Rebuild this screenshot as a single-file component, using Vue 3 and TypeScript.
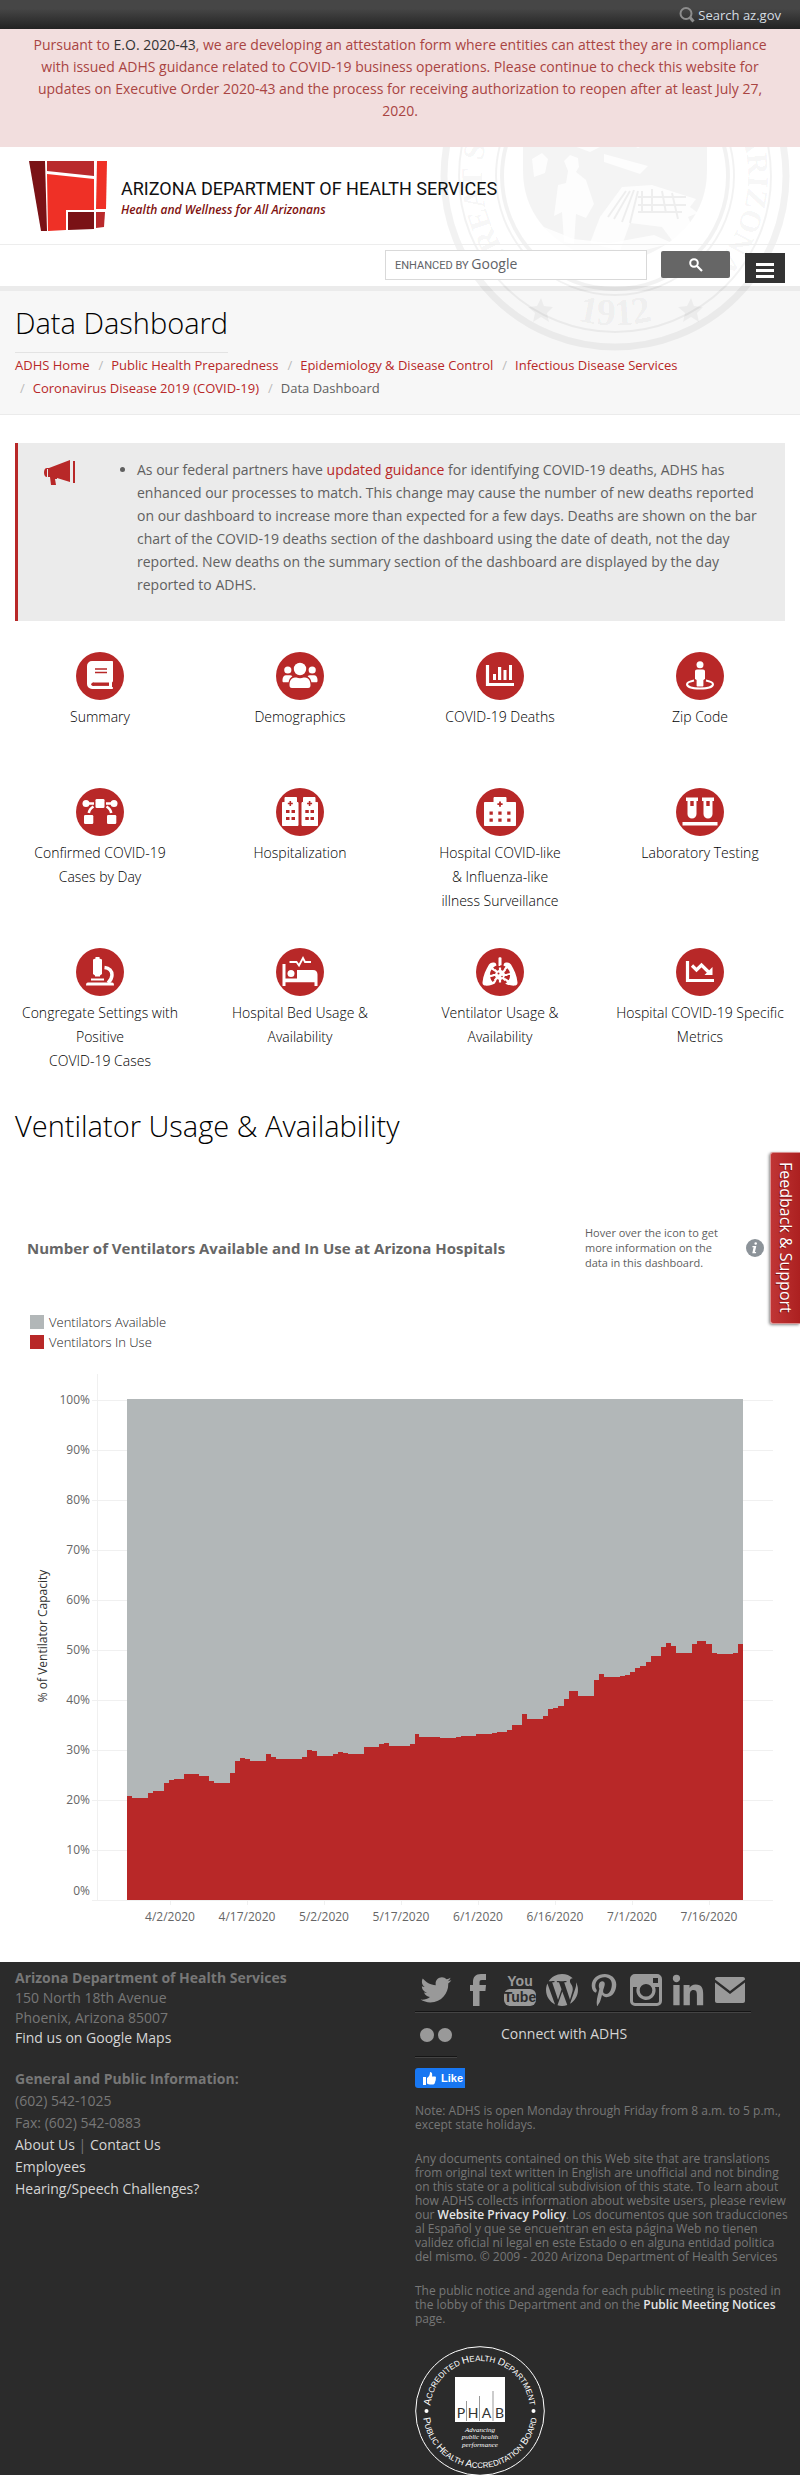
<script setup lang="ts">
interface Tile {
  icon: string
  lines: string[]
}

const crumbs: string[] = [
  'ADHS Home',
  'Public Health Preparedness',
  'Epidemiology & Disease Control',
  'Infectious Disease Services',
  'Coronavirus Disease 2019 (COVID-19)',
]

const tiles: Tile[] = [
  { icon: 'book', lines: ['Summary'] },
  { icon: 'users', lines: ['Demographics'] },
  { icon: 'bars', lines: ['COVID-19 Deaths'] },
  { icon: 'person', lines: ['Zip Code'] },
  { icon: 'nodes', lines: ['Confirmed COVID-19', 'Cases by Day'] },
  { icon: 'towers', lines: ['Hospitalization'] },
  { icon: 'hospital', lines: ['Hospital COVID-like', '& Influenza-like', 'illness Surveillance'] },
  { icon: 'vials', lines: ['Laboratory Testing'] },
  { icon: 'microscope', lines: ['Congregate Settings with', 'Positive', 'COVID-19 Cases'] },
  { icon: 'bed', lines: ['Hospital Bed Usage &', 'Availability'] },
  { icon: 'lungs', lines: ['Ventilator Usage &', 'Availability'] },
  { icon: 'trend', lines: ['Hospital COVID-19 Specific', 'Metrics'] },
]

const percents: number[] = [0, 10, 20, 30, 40, 50, 60, 70, 80, 90, 100]
const dates: string[] = ['4/2/2020', '4/17/2020', '5/2/2020', '5/17/2020', '6/1/2020', '6/16/2020', '7/1/2020', '7/16/2020']

// Ventilators in use: [start of step, level], five units to one percent.
const steps: [number, number][] = [
  [0, 104], [5, 102], [21, 107], [26, 109], [37, 117], [42, 120], [47, 121], [57, 126], [72, 124], [82, 119],
  [87, 117], [103, 127], [108, 139], [113, 142], [118, 141], [123, 139], [139, 146], [144, 143], [149, 141],
  [175, 143], [180, 150], [185, 149], [190, 144], [206, 146], [211, 148], [216, 147], [221, 146], [237, 153],
  [252, 156], [257, 157], [262, 154], [283, 156], [288, 166], [292, 163], [313, 162], [329, 163], [334, 164],
  [349, 166], [365, 167], [370, 168], [380, 170], [385, 175], [395, 186], [400, 181], [416, 184], [421, 191],
  [426, 192], [431, 194], [437, 201], [442, 209], [451, 204], [467, 220], [472, 226], [477, 223], [493, 224],
  [498, 225], [503, 228], [508, 232], [513, 234], [519, 238], [524, 244], [534, 253], [539, 257], [544, 254],
  [549, 247], [565, 256], [570, 259], [579, 256], [585, 247], [590, 246], [606, 247], [611, 256],
]
const plotLeft = 127
const plotWidth = 616
const baseY = 540
const yAt = (percent: number): number => baseY - percent * 5
const usePath: string =
  `M${plotLeft} ${baseY}` +
  steps.map(([x, v]) => `H${plotLeft + x}V${baseY - v}`).join('') +
  `H${plotLeft + plotWidth}V${baseY}Z`
</script>

<template>
  <div class="page">
    <div class="topbar">
      <a href="#" class="az-search">
        <svg width="16" height="16" viewBox="0 0 16 16" aria-hidden="true">
          <circle cx="7" cy="6.500" r="5.500" fill="none" stroke="#8d8d8d" stroke-width="2" />
          <path d="M11 10.500l3.500 4" stroke="#8d8d8d" stroke-width="3" />
        </svg>
        <span>Search az.gov</span>
      </a>
    </div>

    <div class="notice">
      <p>
        Pursuant to <a href="#">E.O. 2020-43</a>, we are developing an attestation form where entities can attest they
        are in compliance with issued ADHS guidance related to COVID-19 business operations. Please continue to check
        this website for updates on Executive Order 2020-43 and the process for receiving authorization to reopen after
        at least July 27, 2020.
      </p>
    </div>

    <div class="masthead">
      <header class="brand-row">
        <a href="#" class="brand">
          <svg width="78" height="70" viewBox="0 0 78 70" aria-hidden="true">
            <path d="M0 0h16l2 70h-6z" fill="#7a1216" />
            <path d="M18 0h47v15l-47-5z" fill="#b92a2c" />
            <path d="M18 13l47 5v31H37v20l-18 1z" fill="#ef3026" />
            <path d="M68 0h10l-1 48h-10z" fill="#ef3026" />
            <path d="M39 51h26v17l-26 1z" fill="#7a1216" />
            <path d="M67 51h9l-1 15-8 1z" fill="#b92a2c" />
          </svg>
          <span class="brand-text">
            <span class="brand-name">ARIZONA DEPARTMENT OF HEALTH SERVICES</span>
            <span class="brand-tag">Health and Wellness for All Arizonans</span>
          </span>
        </a>
      </header>

      <div class="tools">
        <form class="search" @submit.prevent>
          <div class="field">
            <input id="site-search" type="text" aria-label="Search this site, enhanced by Google" />
            <label for="site-search" class="hint">ENHANCED BY <b>Google</b></label>
          </div>
          <button type="submit" class="go" aria-label="Search">
            <svg width="14" height="14" viewBox="0 0 14 14">
              <circle cx="5" cy="5" r="3.800" fill="none" stroke="#fff" stroke-width="2" />
              <path d="M8 8l5 5" stroke="#fff" stroke-width="2.200" />
            </svg>
          </button>
        </form>
        <button type="button" class="menu" aria-label="Menu">
          <span></span><span></span><span></span>
        </button>
      </div>

      <div class="titlebar">
        <h1>Data Dashboard</h1>
        <nav aria-label="Breadcrumb">
          <ol class="crumbs">
            <li v-for="c in crumbs" :key="c"><a href="#">{{ c }}</a></li>
            <li>Data Dashboard</li>
          </ol>
        </nav>
      </div>

      <svg class="seal" viewBox="0 0 350 350" aria-hidden="true">
        <defs>
          <path id="seal-top" d="M81 269A133 133 0 1 1 269 269" />
          <path id="seal-low" d="M60 270A149 149 0 0 0 290 270" />
        </defs>
        <g fill="none" stroke="#000" stroke-opacity=".05">
          <circle cx="175" cy="175" r="171" stroke-width="7" />
          <circle cx="175" cy="175" r="156" stroke-width="2" />
          <circle cx="175" cy="175" r="119" stroke-width="2" />
          <circle cx="175" cy="175" r="113" stroke-width="4" />
        </g>
        <g fill="#000" fill-opacity=".045">
          <path d="M83 70h184v100c0 50-38 82-92 94-54-12-92-44-92-94z" />
          <path d="M101 297l3 8 9 1-6 6 2 9-8-5-8 5 2-9-7-6 9-1zM251 297l3 8 9 1-6 6 2 9-8-5-8 5 2-9-7-6 9-1z" />
        </g>
        <g fill="#fff" fill-opacity=".8">
          <path d="M118 184l8-2 2-12-4-10 6-6 8 3 1 9-3 5 10 8 8 24-8 14-10-4-2 30-10-2-2-30-8 4z" />
          <path d="M160 216l22-30 30-2 44 14-6 8 8 6-10 4 6 14-14 20-18-24-32-4-10 28-30-8z" />
          <path d="M92 158l10-6 6 6-3 14-11 4z" />
          <path d="M134 145l24-20 20 12 26-14 20 14 24-6v8l-26-4-24 12-20-10-28 14z" />
          <path d="M104 226l30 12 36 4 44-8 18 8-30 8-66 2-26-12z" />
          <path d="M164 153l44 12-8 8-36-12z" />
        </g>
        <g fill="none" stroke="#000" stroke-opacity=".06" stroke-width="2">
          <path d="M168 216l18-26M174 218l16-28M182 221l12-32M190 222l8-32M202 190v20M212 188v22M222 190l4 22M232 192l6 26M198 196h48M198 204h48M198 211h44" />
        </g>
        <g class="seal-text">
          <text><textPath href="#seal-top" startOffset="8">GREAT S</textPath></text>
          <text text-anchor="end"><textPath href="#seal-top" startOffset="99%">ARIZONA</textPath></text>
          <text class="seal-year" text-anchor="middle"><textPath href="#seal-low" startOffset="50%">1912</textPath></text>
        </g>
      </svg>
    </div>

    <main>
      <section class="callout">
        <svg class="horn" width="32" height="25" viewBox="0 0 32 25" aria-hidden="true">
          <path d="M3 8h2l21-8v22L13 18v1h-2l1 6H7L6 17H3c-2 0-3-2-3-4.500S1 8 3 8z" fill="#b82828" />
          <path d="M3.500 9v8" stroke="#ebebeb" stroke-width="1" />
          <path d="M30 1v22" stroke="#b82828" stroke-width="2" />
        </svg>
        <ul>
          <li>
            As our federal partners have <a href="#">updated guidance</a> for identifying COVID-19 deaths, ADHS has
            enhanced our processes to match. This change may cause the number of new deaths reported on our dashboard
            to increase more than expected for a few days. Deaths are shown on the bar chart of the COVID-19 deaths
            section of the dashboard using the date of death, not the day reported. New deaths on the summary section
            of the dashboard are displayed by the day reported to ADHS.
          </li>
        </ul>
      </section>

      <nav class="tiles" aria-label="Dashboards">
        <a v-for="t in tiles" :key="t.icon" href="#" class="tile">
          <svg width="48" height="48" viewBox="0 0 48 48" fill="#fff" aria-hidden="true">
            <circle cx="24" cy="24" r="24" fill="#b82828" />
            <template v-if="t.icon === 'book'">
              <path d="M16 9h20c.6 0 1 .4 1 1v19c0 .6-.4 1-1 1.500v4.500c.6 0 1 .4 1 1s-.4 1-1 1H16a5 5 0 0 1-5-5V14a5 5 0 0 1 5-5z" />
              <path d="M19 17h12M19 20.500h12" stroke="#b82828" stroke-width="1.300" />
              <path d="M17 32.200h16" stroke="#b82828" stroke-width="3.400" />
              <circle cx="17" cy="32.200" r="1.700" fill="#b82828" />
            </template>
            <template v-else-if="t.icon === 'users'">
              <circle cx="24" cy="17" r="6.200" /><circle cx="11.800" cy="18" r="3.600" /><circle cx="36.200" cy="18" r="3.600" />
              <path d="M19 25.500h1.500c2 1 5 1 7 0H29c4 0 5.500 4 5.500 7.500 0 2-.6 3-2.500 3H16c-1.900 0-2.500-1-2.500-3 0-3.500 1.500-7.500 5.500-7.500z" />
              <path d="M10 23.300h4c1 0 1.800.3 2.400.9-2.200 1.300-3.500 3.500-3.800 6.100H7.800c-.8 0-1.300-.5-1.300-1.300v-1.200c0-2.500 1.500-4.500 3.500-4.500zM38 23.300h-4c-1 0-1.800.3-2.400.9 2.200 1.300 3.500 3.500 3.800 6.100h4.800c.8 0 1.300-.5 1.300-1.300v-1.200c0-2.500-1.500-4.500-3.500-4.500z" />
            </template>
            <template v-else-if="t.icon === 'bars'">
              <path d="M11.500 13v19.500H38" fill="none" stroke="#fff" stroke-width="3.200" />
              <path d="M17 22h3v6h-3zM22 15h3.200v13H22zM27.500 18h3v10h-3zM33 13h3v15h-3z" />
            </template>
            <template v-else-if="t.icon === 'person'">
              <circle cx="24" cy="12.800" r="3.500" />
              <path d="M21 17.500h6c1.200 0 2 .8 2 2V27l-1.600 1v5.500c0 .6-.4 1-1 1h-4.800c-.6 0-1-.4-1-1V28L19 27v-7.500c0-1.200.8-2 2-2z" />
              <path d="M18 28.500c-4 .8-7 2-7 3.800 0 2.500 5.500 4.300 13 4.300s13-1.800 13-4.300c0-1.800-3-3-7-3.800" fill="none" stroke="#fff" stroke-width="2" />
            </template>
            <template v-else-if="t.icon === 'nodes'">
              <rect x="19.500" y="11" width="9" height="9" rx="1.300" /><rect x="8" y="27" width="9.300" height="9" rx="1.300" />
              <rect x="31" y="27" width="9.300" height="9" rx="1.300" /><circle cx="10" cy="15.500" r="3.500" /><circle cx="38" cy="15.500" r="3.500" />
              <path d="M12 15.500h6M30 15.500h6M17.500 18.500c-2.700 1.600-4.300 3.600-4.700 6.500M30.500 18.500c2.700 1.600 4.300 3.600 4.700 6.500" fill="none" stroke="#fff" stroke-width="2.600" />
            </template>
            <template v-else-if="t.icon === 'towers'">
              <path d="M9 9.500h11.500v5H22v23H6.500v-23H9zM27.500 9.500H39v5h2.500v23H26v-23h1.500z" stroke="#fff" />
              <path d="M14.300 13v5M11.800 15.500h5M33.600 13v5M31.100 15.500h5" stroke="#b82828" stroke-width="1.600" />
              <path d="M10 22h3.500v3H10zM15.500 22H19v3h-3.500zM10 29h3.500v3H10zM15.500 29H19v3h-3.500zM29.300 22h3.500v3h-3.500zM34.500 22H38v3h-3.500zM29.300 29h3.500v3h-3.500zM34.500 29H38v3h-3.500z" fill="#b82828" />
            </template>
            <template v-else-if="t.icon === 'hospital'">
              <path d="M18 9.500h12v5h9.500v23h-31v-23H18z" stroke="#fff" />
              <path d="M24 13.500v5.200M21.400 16.100h5.200" stroke="#b82828" stroke-width="1.800" />
              <path d="M13.500 23.500h3.300v3.300h-3.300zM22.300 23.500h3.300v3.300h-3.300zM31.200 23.500h3.300v3.300h-3.300zM13.500 30.500h3.300v3.300h-3.300zM22.300 30.500h3.300v3.300h-3.300zM31.200 30.500h3.300v3.300h-3.300z" fill="#b82828" />
            </template>
            <template v-else-if="t.icon === 'vials'">
              <path d="M10 9.500h12v3.500h-1.500v13a4.500 4.500 0 0 1-9 0V13H10zM26 9.500h12v3.500h-1.500v13a4.500 4.500 0 0 1-9 0V13H26zM6.500 34h35v3.500h-35z" />
              <path d="M14.300 13h3.400v5h-3.400zM30.300 13h3.400v5h-3.400z" fill="#b82828" />
            </template>
            <template v-else-if="t.icon === 'microscope'">
              <path d="M19.500 9h4v1.500l2.500 1V26l-2 1.500v1h-5v-1L17 26V11.500l2.500-1zM15 30.500h13v2H15z" />
              <path d="M28.500 19.500c5 .5 7.500 3.800 7.500 7.500 0 3.500-1.500 5.500-4 8" fill="none" stroke="#fff" stroke-width="3.500" />
              <path d="M12 34.500h24c1.500 0 2 1 2 3H10c0-2 .5-3 2-3z" />
            </template>
            <template v-else-if="t.icon === 'bed'">
              <path d="M6.500 16h3v16.500H41.500V38h-3v-3.800h-29V38h-3zM21 22h16c3 0 4.500 2 4.500 4.500v6H21z" />
              <circle cx="15" cy="25.500" r="3.500" />
              <path d="M8 32h33" stroke="#fff" stroke-width="3" />
              <path d="M13.500 14h7l2.500 3.500L27 10l2 4h6" fill="none" stroke="#fff" stroke-width="1.800" />
            </template>
            <template v-else-if="t.icon === 'lungs'">
              <path d="M22.500 10c0-1 3-1 3 0v8h-3z" />
              <path d="M17 14.500c3 0 3.500 1.500 3.500 4v16c-3 2.500-8 3.500-12 3-1.500-.4-2-1.500-2-3 .5-7 3.500-13 6.500-18 1-1.300 2.300-2 4-2zM31 14.500c-3 0-3.500 1.500-3.500 4v16c3 2.500 8 3.500 12 3 1.500-.4 2-1.500 2-3-.5-7-3.500-13-6.500-18-1-1.300-2.300-2-4-2z" />
              <circle cx="24" cy="27" r="8" fill="none" stroke="#b82828" stroke-width="4.200" stroke-dasharray="4.300 2" />
              <circle cx="24" cy="27" r="6.500" fill="#b82828" />
              <path d="M24 19.500v15M16.500 27h15M18.700 21.700l10.600 10.600M29.300 21.700L18.700 32.300" stroke="#fff" stroke-width="2.200" />
              <circle cx="24" cy="27" r="5" /><circle cx="22.500" cy="25.500" r="1" fill="#b82828" /><circle cx="26" cy="28.500" r=".8" fill="#b82828" />
            </template>
            <template v-else>
              <path d="M11.500 13v19.500H38" fill="none" stroke="#fff" stroke-width="3.200" />
              <path d="M16 17.500l4.500 4.500 5-5 7 7" fill="none" stroke="#fff" stroke-width="3.200" />
              <path d="M36.500 19v8h-8z" />
            </template>
          </svg>
          <span class="tile-label"><span v-for="l in t.lines" :key="l">{{ l }}</span></span>
        </a>
      </nav>

      <h2>Ventilator Usage &amp; Availability</h2>

      <section class="viz">
        <div class="viz-head">
          <h3>Number of Ventilators Available and In Use at Arizona Hospitals</h3>
          <p>Hover over the icon to get more information on the data in this dashboard.</p>
          <svg width="18" height="18" viewBox="0 0 18 18" role="img" aria-label="Information">
            <circle cx="9" cy="9" r="9" fill="#8c9399" />
            <path d="M9.700 3.200a1.300 1.300 0 1 1 0 2.600 1.300 1.300 0 0 1 0-2.600zM6.500 7h3.800l-1.400 6h1.300l-.3 1.200H6.300L7.600 8.200H6.300z" fill="#fff" />
          </svg>
        </div>
        <ul class="legend">
          <li><i class="sw avail"></i>Ventilators Available</li>
          <li><i class="sw used"></i>Ventilators In Use</li>
        </ul>
        <svg class="chart" viewBox="0 0 800 602" role="img" aria-label="Percent of ventilator capacity by day">
          <g stroke="#f0f0f0" stroke-width="1">
            <path v-for="p in percents" :key="p" :d="`M92 ${yAt(p) + 0.5}H773`" />
            <path d="M97.500 14V540" />
            <path v-for="(d, i) in dates" :key="d" :d="`M${170.5 + i * 77} 540v5`" />
          </g>
          <rect :x="plotLeft" y="39" :width="plotWidth" height="501" fill="#b2b7b8" />
          <path :d="usePath" fill="#b82828" />
          <g class="ticks" text-anchor="end">
            <text v-for="p in percents" :key="p" x="90" :y="p === 0 ? 535 : yAt(p) + 4">{{ p }}%</text>
          </g>
          <g class="ticks" text-anchor="middle">
            <text v-for="(d, i) in dates" :key="d" :x="170 + i * 77" y="561">{{ d }}</text>
          </g>
          <text class="axis-name" text-anchor="middle" transform="translate(47 276) rotate(-90)">% of Ventilator Capacity</text>
        </svg>
      </section>
    </main>

    <footer>
      <div class="contact">
        <address>
          <strong>Arizona Department of Health Services</strong><br />
          150 North 18th Avenue<br />
          Phoenix, Arizona 85007<br />
          <a href="#">Find us on Google Maps</a>
        </address>
        <p>
          <strong>General and Public Information:</strong><br />
          (602) 542-1025<br />
          Fax: (602) 542-0883<br />
          <a href="#">About Us</a> | <a href="#">Contact Us</a><br />
          <a href="#">Employees</a><br />
          <a href="#">Hearing/Speech Challenges?</a>
        </p>
      </div>

      <div class="info">
        <div class="social">
          <a href="#" aria-label="Twitter"><svg width="32" height="32" viewBox="-10 -8 532 532"><path d="M459.370 151.716c.325 4.548.325 9.097.325 13.645 0 138.720-105.583 298.558-298.558 298.558-59.452 0-114.680-17.219-161.137-47.106 8.447.974 16.568 1.299 25.340 1.299 49.055 0 94.213-16.568 130.274-44.832-46.132-.975-84.792-31.188-98.112-72.772 6.498.974 12.995 1.624 19.818 1.624 9.421 0 18.843-1.300 27.614-3.573-48.081-9.747-84.143-51.980-84.143-102.985v-1.299c13.969 7.797 30.214 12.670 47.431 13.319-28.264-18.843-46.781-51.005-46.781-87.391 0-19.492 5.197-37.360 14.294-52.954 51.655 63.675 129.300 105.258 216.365 109.807-1.624-7.797-2.599-15.918-2.599-24.040 0-57.828 46.782-104.934 104.934-104.934 30.213 0 57.502 12.670 76.670 33.137 23.715-4.548 46.456-13.320 66.599-25.340-7.798 24.366-24.366 44.833-46.132 57.827 21.117-2.273 41.584-8.122 60.426-16.243-14.292 20.791-32.161 39.308-52.628 54.253z" /></svg></a>
          <a href="#" aria-label="Facebook"><svg width="32" height="32" viewBox="0 0 32 32"><path d="M24 0v6h-4c-2 0-2.500.8-2.500 2.500V11H24l-.6 6h-5.900v15H11V17H8v-6h3V8c0-5 2.500-8 8-8z" /></svg></a>
          <a href="#" aria-label="YouTube"><svg width="32" height="32" viewBox="0 0 32 32"><text x="16" y="12" text-anchor="middle" class="yt">You</text><rect x="0" y="15" width="32" height="17" rx="6" /><text x="16" y="28" text-anchor="middle" class="yt dark">Tube</text></svg></a>
          <a href="#" aria-label="WordPress"><svg width="32" height="32" viewBox="43 43 426 426"><path d="M61.700 169.400l101.500 278C92.200 413 43.300 340.200 43.300 256c0-30.900 6.600-60.100 18.400-86.600zm337.900 75.900c0-26.300-9.400-44.500-17.500-58.700-10.800-17.500-20.900-32.400-20.900-49.900 0-19.600 14.800-37.800 35.700-37.800.9 0 1.800.1 2.800.2-37.900-34.700-88.300-55.900-143.700-55.900-74.300 0-139.700 38.100-177.800 95.900 5 .2 9.700.3 13.700.3 22.200 0 56.700-2.700 56.700-2.700 11.500-.7 12.800 16.200 1.400 17.500 0 0-11.500 1.300-24.300 2l77.500 230.400L249.800 247l-33.100-90.800c-11.500-.7-22.300-2-22.300-2-11.500-.7-10.100-18.200 1.300-17.500 0 0 35.100 2.700 56 2.700 22.200 0 56.700-2.700 56.700-2.700 11.500-.7 12.800 16.200 1.400 17.500 0 0-11.500 1.300-24.300 2l76.900 228.700 21.200-70.900c9-29.400 16-50.500 16-68.700zm-139.900 29.300l-63.800 185.500c19.100 5.600 39.200 8.700 60.100 8.700 24.800 0 48.500-4.300 70.600-12.100-.6-.9-1.100-1.900-1.500-2.900l-65.400-179.200zm183-120.700c.9 6.800 1.400 14 1.400 21.900 0 21.600-4 45.800-16.200 76.200l-65 187.900C426.200 403 468.700 334.500 468.700 256c0-37-9.400-71.800-26-102.100z" /></svg></a>
          <a href="#" aria-label="Pinterest"><svg width="32" height="32" viewBox="-58 6 500 500"><path d="M204 6.500C101.400 6.500 0 74.900 0 185.600 0 256 39.600 296 63.600 296c9.900 0 15.600-27.600 15.600-35.400 0-9.300-23.700-29.100-23.700-67.800 0-80.400 61.200-137.400 140.400-137.400 68.100 0 118.500 38.700 118.500 109.800 0 53.100-21.300 152.700-90.300 152.700-24.900 0-46.200-18-46.200-43.800 0-37.800 26.400-74.400 26.400-113.400 0-66.200-93.900-54.200-93.900 25.800 0 16.800 2.100 35.400 9.600 50.700-13.800 59.400-42 147.900-42 209.100 0 18.900 2.700 37.500 4.500 56.400 3.400 3.800 1.700 3.400 6.900 1.500 50.400-69 48.600-82.500 71.400-172.800 12.300 23.400 44.100 36 69.300 36 106.200 0 153.900-103.500 153.900-196.800C384 71.300 298.200 6.500 204 6.500z" /></svg></a>
          <a href="#" aria-label="Instagram"><svg width="32" height="32" viewBox="0 0 32 32"><path fill-rule="evenodd" d="M5 0h22a5 5 0 0 1 5 5v22a5 5 0 0 1-5 5H5a5 5 0 0 1-5-5V5a5 5 0 0 1 5-5zm18 4v5h5V4zM3 13v14c0 1.300.7 2 2 2h22c1.300 0 2-.7 2-2V13h-4c.4 1 .6 2 .6 3.300A9.600 9.600 0 1 1 7 13zm13-3a6.300 6.300 0 1 0 0 12.600A6.300 6.300 0 0 0 16 10z" /></svg></a>
          <a href="#" aria-label="LinkedIn"><svg width="32" height="32" viewBox="-12 -12 472 472"><path d="M100.280 448H7.400V148.900h92.880zM53.790 108.100C24.090 108.100 0 83.500 0 53.800a53.790 53.790 0 0 1 107.580 0c0 29.700-24.100 54.300-53.790 54.300zM447.900 448h-92.680V302.400c0-34.700-.7-79.200-48.290-79.200-48.290 0-55.690 37.700-55.690 76.700V448h-92.780V148.900h89.080v40.800h1.300c12.400-23.500 42.690-48.300 87.880-48.300 94 0 111.280 61.900 111.280 142.300V448z" /></svg></a>
          <a href="#" aria-label="Email"><svg width="32" height="32" viewBox="0 0 32 32"><path d="M3 3h26c1.200 0 2 .8 2 2v.5L16 17 1 5.500V5c0-1.200.8-2 2-2zM1 8.500L16 20 31 8.500V27c0 1.200-.8 2-2 2H3c-1.200 0-2-.8-2-2z" /></svg></a>
        </div>
        <div class="connect">
          <a href="#" class="flickr" aria-label="Flickr"><svg width="32" height="16" viewBox="0 0 32 16"><circle cx="7" cy="8" r="7" /><circle cx="25" cy="8" r="7" /></svg></a>
          <a href="#" class="connect-link">Connect with ADHS</a>
        </div>
        <button type="button" class="like">
          <svg width="13" height="13" viewBox="0 0 13 13" aria-hidden="true"><path class="thumb" d="M0 5h3v8H0zM4 6c2-1 3-3 3-6 2 0 2.500 1.500 2 4.500h3c1 0 1.200 1 .7 1.700.4.500.3 1.300-.2 1.700.3.500.2 1.200-.4 1.600.2.600 0 1.200-.5 1.500.2 1-.4 1.500-1.300 1.500H7c-1 0-2-.5-3-1z" /></svg>
          <span>Like</span>
        </button>
        <p>Note: ADHS is open Monday through Friday from 8 a.m. to 5 p.m., except state holidays.</p>
        <p>
          Any documents contained on this Web site that are translations from original text written in English are
          unofficial and not binding on this state or a political subdivision of this state. To learn about how ADHS
          collects information about website users, please review our <a href="#">Website Privacy Policy</a>. Los
          documentos que son traducciones al Español y que se encuentran en esta página Web no tienen validez oficial
          ni legal en este Estado o en alguna entidad politica del mismo. © 2009 - 2020 Arizona Department of Health
          Services
        </p>
        <p>
          The public notice and agenda for each public meeting is posted in the lobby of this Department and on the
          <a href="#">Public Meeting Notices</a> page.
        </p>
        <svg class="phab" width="130" height="130" viewBox="0 0 130 130" fill="#fff">
          <defs>
            <path id="phab-top" d="M15 65A50 50 0 0 1 115 65" />
            <path id="phab-low" d="M8 65A57 57 0 0 0 122 65" />
          </defs>
          <circle cx="65" cy="65" r="64.300" fill="none" stroke="#fff" />
          <g class="phab-ring" text-anchor="middle">
            <text><textPath href="#phab-top" startOffset="50%"><tspan class="cap">A</tspan>CCREDITED <tspan class="cap">H</tspan>EALTH <tspan class="cap">D</tspan>EPARTMENT</textPath></text>
            <text><textPath href="#phab-low" startOffset="50%"><tspan class="cap">P</tspan>UBLIC <tspan class="cap">H</tspan>EALTH <tspan class="cap">A</tspan>CCREDITATION <tspan class="cap">B</tspan>OARD</textPath></text>
          </g>
          <circle cx="11.500" cy="65" r="2" /><circle cx="118.500" cy="65" r="2" />
          <rect x="40" y="31" width="50" height="45" />
          <path d="M51.500 55v20M64.500 50v25M78 45v30" stroke="#999" />
          <g class="phab-word" text-anchor="middle">
            <text x="46" y="72">P</text><text x="58" y="72">H</text><text x="71.500" y="72">A</text><text x="84.500" y="72">B</text>
          </g>
          <g class="phab-tag" text-anchor="middle">
            <text x="65" y="86">Advancing</text><text x="65" y="93">public health</text><text x="65" y="101">performance</text>
          </g>
        </svg>
      </div>
    </footer>

    <button type="button" class="feedback"><span>Feedback &amp; Support</span></button>
  </div>
</template>

<style>
body { margin: 0; background: #fff; }
</style>

<style scoped>
* { box-sizing: border-box; }
.page {
  position: relative;
  font: 14px/22px "Open Sans", "Noto Sans", sans-serif;
  color: #606060;
}
a { text-decoration: none; }
p, h1, h2, h3, ul, ol { margin: 0; padding: 0; }
button { padding: 0; border: 0; cursor: pointer; font: inherit; }

.topbar {
  display: flex;
  justify-content: flex-end;
  align-items: center;
  height: 29px;
  padding-right: 19px;
  background: linear-gradient(#464646 30%, #222);
}
.az-search { display: flex; align-items: center; gap: 3px; font-size: 13px; color: #d5dde2; }

.notice {
  min-height: 118px;
  padding: 5px 30px 25px;
  background: #f2dede;
  color: #a94442;
  text-align: center;
}
.notice a { color: #333; }

.masthead { position: relative; overflow: hidden; }
.seal { position: absolute; top: -146px; right: 10px; width: 350px; height: 350px; }
.seal-text { fill: #000; fill-opacity: .05; font: bold 30px "Liberation Serif", serif; }
.seal-year { font-size: 38px; }
.brand-row, .search, .menu, .titlebar > * { position: relative; z-index: 1; }
.brand-row { padding: 14px 29px 13px; border-bottom: 1px solid #ededed; }
.brand { display: flex; gap: 14px; align-items: center; width: max-content; }
.brand svg { display: block; }
.brand-text { display: flex; flex-direction: column; padding-top: 4px; }
.brand-name { font: 18px/24px Roboto, sans-serif; color: #111; }
.brand-tag { font: italic 600 12px/18px "Open Sans", sans-serif; color: #80120f; }

.tools { display: flex; justify-content: flex-end; gap: 15px; padding: 5px 15px 3px; border-bottom: 5px solid #ebebeb; }
.search { display: flex; gap: 14px; }
.field { position: relative; width: 262px; height: 30px; }
.field input { width: 100%; height: 100%; border: 1px solid #d9d9d9; background: #fff; }
.hint { position: absolute; left: 10px; top: 0; font: 11px/30px Roboto, sans-serif; color: #5f6368; }
.hint b { font: 500 14px/28px "Open Sans", sans-serif; }
.go { display: flex; align-items: center; justify-content: center; width: 69px; height: 27px; margin-top: 1px; border-radius: 2px; background: #666; }
.menu { display: flex; flex-direction: column; align-items: center; gap: 3px; width: 40px; height: 30px; margin-top: 3px; padding-top: 10px; background: #333; }
.menu span { width: 18px; height: 3px; background: #fff; }

.titlebar { padding: 15px 15px 14px; background: #f7f7f7; border-bottom: 1px solid #ebebeb; }
h1, h2 { font-size: 29px; font-weight: 300; color: #000; }
h1 { width: max-content; padding-bottom: 12px; line-height: 34px; border-bottom: 1px solid #e3e3e3; }
.crumbs { display: flex; flex-wrap: wrap; padding-top: 1px; font-size: 13px; line-height: 23px; list-style: none; }
.crumbs li + li::before { content: "/"; padding: 0 8px 0 9px; color: #bbb; }
.crumbs a, .callout a { color: #b82828; }
.crumbs li:nth-child(5)::before { padding-left: 5px; }

.callout { display: flex; margin: 28px 15px 0; padding: 15px 24px 25px 26px; border-left: 3px solid #b82828; background: #ebebeb; }
.horn { flex: none; margin: 2px 61px 0 0; }
.callout ul { line-height: 23px; }

.tiles { display: grid; grid-template-columns: repeat(4, 1fr); row-gap: 35px; margin-top: 31px; }
.tile { display: flex; flex-direction: column; align-items: center; gap: 5px; color: #000; }
.tile-label { display: flex; flex-direction: column; align-items: center; min-height: 48px; font-size: 14px; font-weight: 300; line-height: 24px; white-space: nowrap; }
h2 { padding: 30px 15px 0; line-height: 46px; }

.viz { padding-top: 76px; }
.viz-head { display: grid; grid-template-columns: 1fr 140px 18px; align-items: center; padding: 0 36px 0 27px; column-gap: 21px; }
.viz-head h3 { font-size: 15px; font-weight: 700; color: #666; }
.viz-head p { font-size: 11px; line-height: 15px; }
.legend { padding: 42px 30px 0; list-style: none; font-size: 13px; font-weight: 300; line-height: 20px; color: #222; }
.legend li { display: flex; align-items: center; gap: 5px; }
.sw { width: 14px; height: 14px; }
.avail { background: #b2b7b8; }
.used { background: #b82828; }
.chart { display: block; width: 100%; height: auto; margin-top: 8px; font-family: "Open Sans", sans-serif; }
.ticks { font-size: 12px; fill: #666; }
.axis-name { font-size: 12px; fill: #333; }

footer { display: grid; grid-template-columns: 1fr 1fr; padding-top: 6px; background: #2b2b2b; color: #777; }
.contact, .info { padding: 0 10px 0 15px; }
footer a { color: #d5d5d5; }
address { font-style: normal; line-height: 20px; }
.contact p { margin-top: 20px; }
.info svg { display: block; fill: #999; }
.social { display: flex; width: max-content; }
.social a, .flickr { display: flex; justify-content: center; width: 42px; border-bottom: 1px solid #151515; box-shadow: 0 1px #444; }
.social a { padding: 6px 0 5px; }
.yt { font: bold 14px "Liberation Sans Narrow", "Liberation Sans", sans-serif; }
.dark { fill: #2b2b2b; }
.connect { display: flex; }
.flickr { padding: 15px 0 13px; }
.connect-link { margin: 11px 0 0 44px; }
.like { display: flex; align-items: center; gap: 5px; width: 50px; height: 20px; margin: 11px 0 16px; padding-left: 8px; border-radius: 3px 0 0 3px; background: #1877f2; color: #fff; font: bold 11px "Liberation Sans", sans-serif; }
.thumb { fill: #fff; }
.info p { margin-bottom: 20px; font-size: 12px; line-height: 14px; }
.info p a { font-weight: 600; color: #e5e5e5; }
.info .phab { fill: #fff; }
.phab-ring { font: 8px "Liberation Sans", sans-serif; }
.cap { font-size: 10px; }
.phab-word { font: 14px Lato, sans-serif; fill: #333; }
.phab-tag { font: italic 7px "Liberation Serif", serif; }

.feedback { position: absolute; top: 1152px; right: 0; width: 30px; height: 172px; padding-top: 4px; border: 1px solid #d89090; border-right: 0; border-radius: 3px 0 0 3px; background: linear-gradient(90deg, #c03535, #ac2020); box-shadow: -1px 1px 3px #888; color: #fff; }
.feedback span { writing-mode: vertical-rl; font-size: 16px; line-height: 28px; text-shadow: 1px 1px #801515; }
</style>
